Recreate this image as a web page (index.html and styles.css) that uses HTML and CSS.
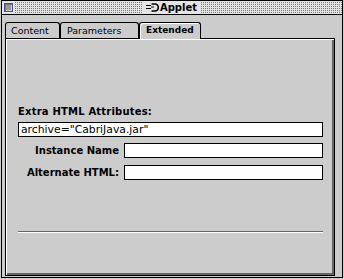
FILE: index.html
```html
<!DOCTYPE html>
<html lang="en">
<head>
    <meta charset="UTF-8">
    <title>Applet</title>
    <link rel="stylesheet" href="styles.css">
</head>
<body>
    <div class="window">
        <div class="titlebar">
            <span class="closebox"></span>
            <div class="title">
                <svg class="plug" width="13" height="9" viewBox="0 0 13 9">
                    <path d="M0 2.5h5M0 5.5h5M5 4h3" stroke="#000" stroke-width="1.2" fill="none"/>
                    <path d="M5.5 1h3.5a3 3.2 0 0 1 0 7h-3.5" stroke="#000" stroke-width="1.6" fill="none"/>
                </svg>
                <span>Applet</span>
            </div>
        </div>
        <div class="content">
            <div class="tabs">
                <div class="tab tab-content">Content</div>
                <div class="tab tab-params">Parameters</div>
                <div class="tab tab-ext active">Extended</div>
            </div>
            <div class="panel">
                <label class="field-title" for="extra">Extra HTML Attributes:</label>
                <input type="text" id="extra" class="field" value='archive="CabriJava.jar"'>
                <div class="form-row">
                    <label for="instanceName">Instance Name</label>
                    <input type="text" id="instanceName" class="field">
                </div>
                <div class="form-row">
                    <label for="altHtml">Alternate HTML:</label>
                    <input type="text" id="altHtml" class="field">
                </div>
                <div class="separator"></div>
            </div>
        </div>
    </div>
</body>
</html>
```
FILE: styles.css
```css
body {
    margin: 0;
    background-color: #ccc;
    font-family: "DejaVu Sans", sans-serif;
    color: #000;
}
.window {
    margin-left: 1px;
    width: 342px;
    height: 278px;
    box-sizing: border-box;
    border: 1px solid #000;
    background-color: #ccc;
    display: flex;
    flex-direction: column;
}
/* 1px dots on a 2px grid */
.titlebar {
    height: 13px;
    border-bottom: 1px solid #000;
    background-color: #e4e4e4;
    background-image:
        linear-gradient(90deg, #e4e4e4 1px, transparent 1px),
        linear-gradient(#e4e4e4 1px, #777 1px);
    background-size: 2px 2px;
    display: grid;
    grid-template-columns: 1fr auto 1fr;
    align-items: center;
}
.closebox {
    justify-self: start;
    margin-left: 2px;
    width: 9px;
    height: 9px;
    box-sizing: border-box;
    border: 1px solid #50508c;
    background-color: #9a9a9a;
    box-shadow: 0 0 0 1px #e4e4e4, inset 1px 1px 0 #777, inset -1px -1px 0 #ccc;
}
.title {
    height: 13px;
    padding: 0 4px 0 3px;
    background-color: #e4e4e4;
    display: flex;
    align-items: center;
    gap: 1px;
    font-weight: bold;
    font-size: 10px;
}
.content {
    flex: 1;
    padding: 7px 7px 1px 3px;
    display: flex;
    flex-direction: column;
}
.tabs {
    display: flex;
    align-items: flex-end;
    height: 16px;
}
.tab {
    height: 16px;
    box-sizing: border-box;
    padding: 0 0 1px 5px;
    border: 1px solid #000;
    border-bottom: none;
    border-radius: 3px 3px 0 0;
    font-size: 9.5px;
    line-height: 15px;
    white-space: nowrap;
}
.tab-content {
    width: 55px;
}
.tab-params {
    width: 79px;
    padding-left: 6px;
}
.tab-ext {
    width: 62px;
    padding-left: 6px;
}
.tab.active {
    position: relative;
    z-index: 1;
    height: 17px;
    margin-bottom: -1px;
    background-color: #ccc;
    font-weight: bold;
    font-size: 9px;
    box-shadow: inset 1px 1px 0 #fff;
}
.panel {
    width: 330px;
    height: 238px;
    box-sizing: border-box;
    border: 1px solid #000;
    box-shadow: inset 1px 1px 0 #fff, inset -2px -2px 0 #666;
    padding: 67px 11px 0 12px;
}
.field-title {
    display: block;
    font-size: 10px;
    font-weight: bold;
    letter-spacing: 0.2px;
    line-height: 12px;
    margin-bottom: 4px;
}
.field {
    display: block;
    width: 305px;
    height: 15px;
    box-sizing: border-box;
    margin: 0;
    padding: 0 2px;
    border: 1px solid #000;
    border-radius: 0;
    background-color: #fff;
    font-family: "DejaVu Sans", sans-serif;
    font-size: 10.8px;
    outline: none;
}
.form-row {
    display: grid;
    grid-template-columns: 101px 1fr;
    column-gap: 5px;
    align-items: center;
    margin-top: 6px;
}
.form-row + .form-row {
    margin-top: 7px;
}
.form-row label {
    text-align: right;
    font-size: 10px;
    font-weight: bold;
    white-space: nowrap;
}
.form-row .field {
    width: 199px;
}
.separator {
    margin-top: 51px;
    height: 1px;
    border-bottom: 1px solid #fff;
    background-color: #666;
    width: 305px;
}
```
